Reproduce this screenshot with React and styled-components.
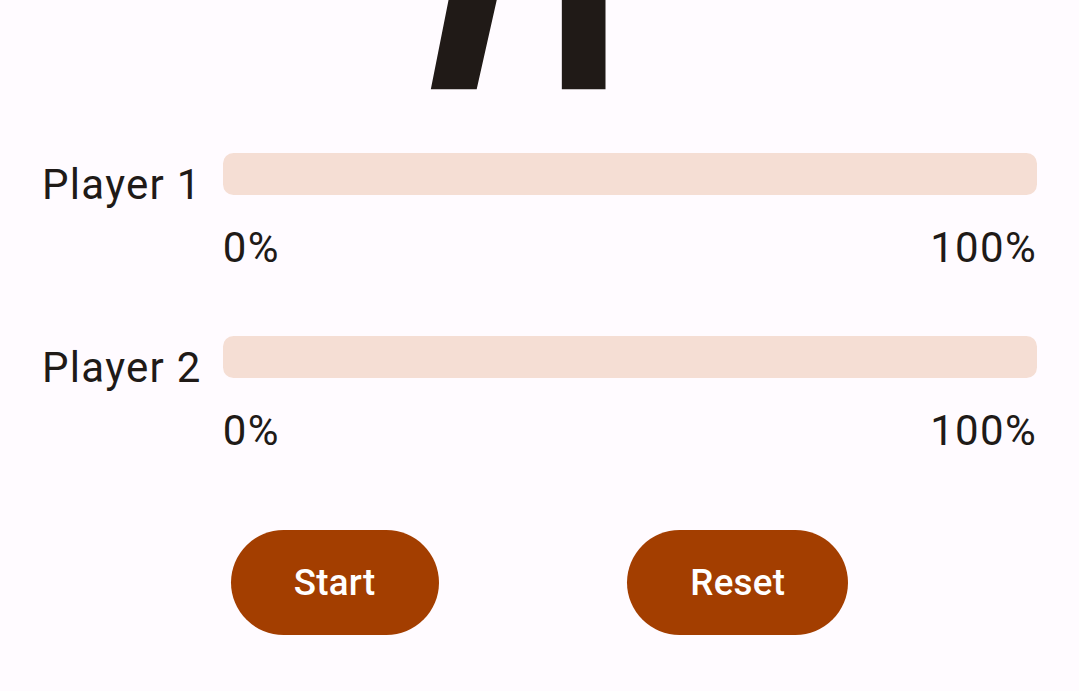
import React from "react";
import styled, { createGlobalStyle } from "styled-components";

const GlobalStyle = createGlobalStyle`
  body {
    margin: 0;
    background: #fffbff;
    color: #201a17;
    font-family: Roboto, "Noto Sans", sans-serif;
  }
`;

const players = [
  { name: "Player 1", progress: 0 },
  { name: "Player 2", progress: 0 },
];

function WalkIcon() {
  return (
    <svg width="524" height="524" viewBox="0 0 24 24" fill="#201a17">
      <path d="M13.5 5.5c1.1 0 2-.9 2-2s-.9-2-2-2-2 .9-2 2 .9 2 2 2zM9.8 8.9L7 23h2.1l1.8-8 2.1 2v6h2v-7.5l-2.1-2 .6-3C14.8 12 16.8 13 19 13v-2c-1.9 0-3.5-1-4.3-2.4l-1-1.6c-.4-.6-1-1-1.7-1-.3 0-.5.1-.8.1L6 8.3V13h2V9.6l1.8-.7" />
    </svg>
  );
}

function StatusIndicator({ name, progress, spaceAbove }) {
  return (
    <StatusRow $spaceAbove={spaceAbove}>
      <Participant>{name}</Participant>
      <ProgressColumn>
        <Track>
          <Fill style={{ width: `${progress * 100}%` }} />
        </Track>
        <Scale>
          <span>{Math.round(progress * 100)}%</span>
          <span>100%</span>
        </Scale>
      </ProgressColumn>
    </StatusRow>
  );
}

export default function App() {
  return (
    <>
      <GlobalStyle />
      <Screen>
        <IconArea>
          <WalkIcon />
        </IconArea>
        {players.map((p, i) => (
          <StatusIndicator
            key={p.name}
            name={p.name}
            progress={p.progress}
            spaceAbove={i === 0 ? 0 : 57}
          />
        ))}
        <Controls>
          <PillButton>Start</PillButton>
          <PillButton>Reset</PillButton>
        </Controls>
      </Screen>
    </>
  );
}

const Screen = styled.div`
  display: flex;
  flex-direction: column;
  padding: 0 42px;
  height: 691px;
  box-sizing: border-box;
  overflow: hidden;
`;

const IconArea = styled.div`
  height: 111px;
  margin-bottom: 42px;
  overflow: hidden;
  display: flex;
  align-items: flex-end;
  justify-content: center;
  flex-shrink: 0;

  svg {
    flex-shrink: 0;
    display: block;
  }
`;

const StatusRow = styled.div`
  display: flex;
  align-items: flex-start;
  margin-top: ${(p) => p.$spaceAbove}px;
`;

const Participant = styled.div`
  font-size: 42px;
  line-height: 63px;
  letter-spacing: 1.3px;
  padding-right: 21px;
  white-space: nowrap;
`;

const ProgressColumn = styled.div`
  flex: 1;
  display: flex;
  flex-direction: column;
  gap: 21px;
`;

const Track = styled.div`
  height: 42px;
  border-radius: 10.5px;
  background: #f5ded4;
  overflow: hidden;
`;

const Fill = styled.div`
  height: 100%;
  background: #a33e00;
`;

const Scale = styled.div`
  display: flex;
  justify-content: space-between;
  font-size: 42px;
  line-height: 63px;
  letter-spacing: 1.3px;
`;

const Controls = styled.div`
  display: flex;
  justify-content: space-evenly;
  margin-top: 68px;
`;

const PillButton = styled.button`
  height: 105px;
  padding: 0 63px;
  border: none;
  border-radius: 53px;
  background: #a33e00;
  color: #ffffff;
  font-family: Roboto, "Noto Sans", sans-serif;
  font-size: 36.75px;
  font-weight: 500;
  letter-spacing: 0.26px;
  cursor: pointer;
`;
